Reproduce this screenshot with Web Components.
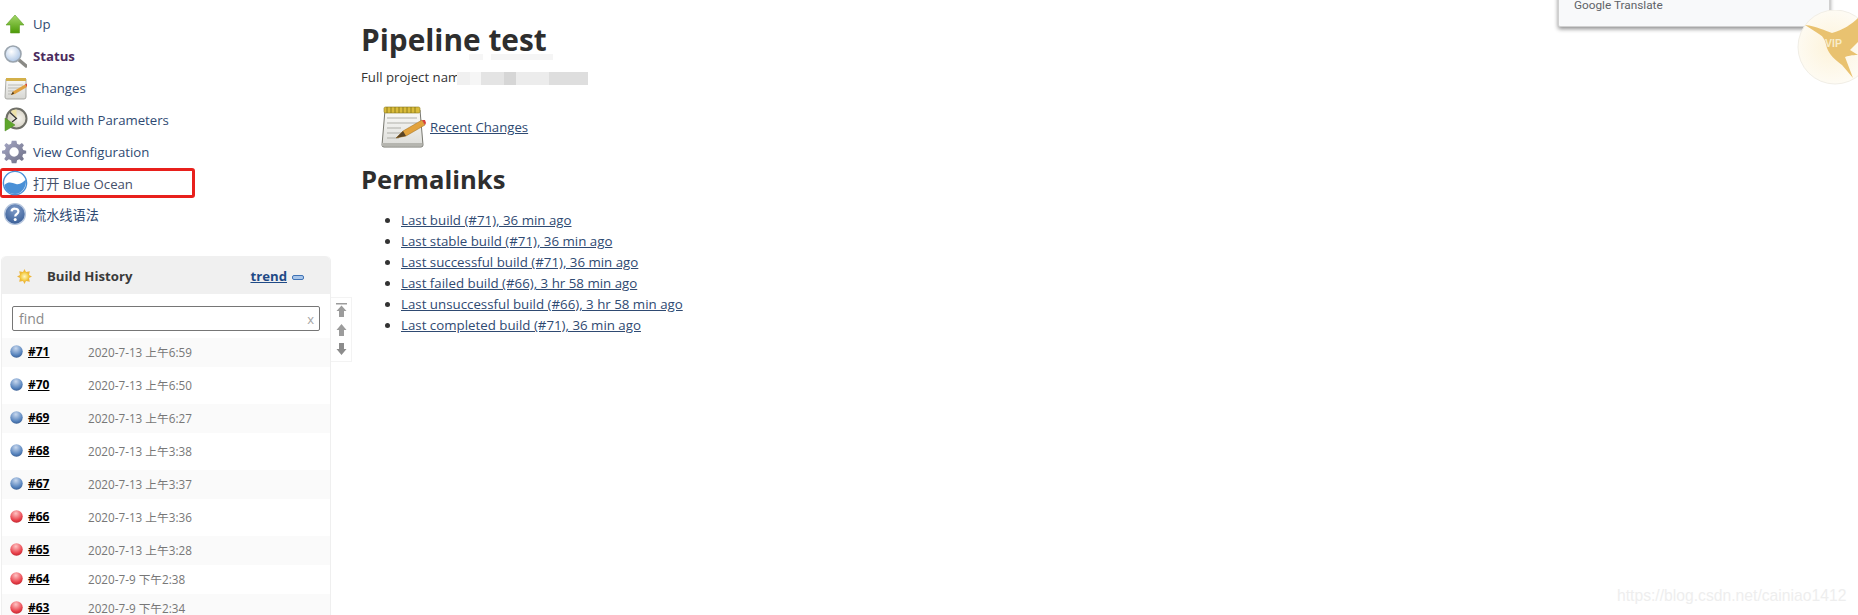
<!DOCTYPE html>
<html>
<head>
<meta charset="utf-8">
<title>Pipeline test</title>
<style>
    html, body { margin: 0; height: 615px; overflow: hidden; background: #fff; }
    body { font-family: "Open Sans", "Noto Sans CJK SC", sans-serif; font-size: 13.2px; color: #333; }
</style>
</head>
<body>
<jk-page>
    <jk-side-panel slot="side">
        <jk-task icon="up" label="Up"></jk-task>
        <jk-task icon="status" label="Status" current></jk-task>
        <jk-task icon="changes" label="Changes"></jk-task>
        <jk-task icon="build" label="Build with Parameters"></jk-task>
        <jk-task icon="config" label="View Configuration"></jk-task>
        <jk-task icon="ocean" label="打开 Blue Ocean" marked></jk-task>
        <jk-task icon="help" label="流水线语法"></jk-task>
        <jk-build-history>
            <jk-build-row num="71" date="2020-7-13 上午6:59" state="ok"></jk-build-row>
            <jk-build-row num="70" date="2020-7-13 上午6:50" state="ok"></jk-build-row>
            <jk-build-row num="69" date="2020-7-13 上午6:27" state="ok"></jk-build-row>
            <jk-build-row num="68" date="2020-7-13 上午3:38" state="ok"></jk-build-row>
            <jk-build-row num="67" date="2020-7-13 上午3:37" state="ok"></jk-build-row>
            <jk-build-row num="66" date="2020-7-13 上午3:36" state="bad"></jk-build-row>
            <jk-build-row num="65" date="2020-7-13 上午3:28" state="bad" tight></jk-build-row>
            <jk-build-row num="64" date="2020-7-9 下午2:38" state="bad" tight></jk-build-row>
            <jk-build-row num="63" date="2020-7-9 下午2:34" state="bad" tight></jk-build-row>
        </jk-build-history>
    </jk-side-panel>
    <jk-main-panel slot="main">
        <jk-permalink>Last build (#71), 36 min ago</jk-permalink>
        <jk-permalink>Last stable build (#71), 36 min ago</jk-permalink>
        <jk-permalink>Last successful build (#71), 36 min ago</jk-permalink>
        <jk-permalink>Last failed build (#66), 3 hr 58 min ago</jk-permalink>
        <jk-permalink>Last unsuccessful build (#66), 3 hr 58 min ago</jk-permalink>
        <jk-permalink>Last completed build (#71), 36 min ago</jk-permalink>
    </jk-main-panel>
</jk-page>
<jk-translate-popup></jk-translate-popup>
<jk-vip-badge></jk-vip-badge>
<jk-watermark>https://blog.csdn.net/cainiao1412</jk-watermark>

<script>
const ICONS = {
    up: `<svg width="24" height="24" viewBox="0 0 24 24"><defs><linearGradient id="g" x1="0" y1="0" x2="0" y2="1"><stop offset="0" stop-color="#a5d86a"/><stop offset="1" stop-color="#4c9a06"/></linearGradient></defs>
        <path d="M12 3 L21 13 H16.5 V21 H7.5 V13 H3 Z" fill="url(#g)" stroke="#5f9e28" stroke-width=".6"/></svg>`,
    status: `<svg width="24" height="24" viewBox="0 0 24 24"><defs><radialGradient id="g" cx=".4" cy=".35" r=".7"><stop offset="0" stop-color="#fff"/><stop offset="1" stop-color="#a9c3e4"/></radialGradient></defs>
        <path d="M16 16 L23 22" stroke="#8a8a86" stroke-width="3.4" stroke-linecap="round"/>
        <circle cx="10" cy="10" r="8" fill="url(#g)" stroke="#9aa4ae" stroke-width="1.6"/></svg>`,
    changes: `<svg width="24" height="24" viewBox="0 0 24 24"><defs><linearGradient id="g" x1="0" y1="0" x2="0" y2="1"><stop offset="0" stop-color="#f8f8f6"/><stop offset="1" stop-color="#d6d6d2"/></linearGradient></defs>
        <path d="M3 3 H23 V21 Q23 23 21 23 H4 Q2 23 2 21 Z" fill="url(#g)" stroke="#9b9b96" stroke-width=".8"/>
        <rect x="3" y="2" width="20" height="3" fill="#d3b04a"/>
        <path d="M5 9 H20 M5 12 H17 M5 15 H11 M5 18 H9" stroke="#b5b5b0" stroke-width=".9"/>
        <path d="M8 19 L10 15.5 L22 8.5 L24 11 L12 18 Z" fill="#e0a040"/>
        <path d="M22 8.5 L24 11 L25 9.5 L23.4 7.6 Z" fill="#d84a3a"/>
        <path d="M8 19 L10 15.5 L11 17.8 Z" fill="#4a3a20"/></svg>`,
    build: `<svg width="26" height="26" viewBox="0 0 26 26"><defs><radialGradient id="g" cx=".6" cy=".5" r=".6"><stop offset="0" stop-color="#f6f4ee"/><stop offset="1" stop-color="#cfcabb"/></radialGradient></defs>
        <circle cx="14.5" cy="11.5" r="10" fill="url(#g)" stroke="#6f6f68" stroke-width="2"/>
        <path d="M14.5 11.5 L9 4 A9 9 0 0 1 14.5 2.5 Z" fill="#eee2a8"/>
        <path d="M8 5.5 L14.5 11.5 L10 15" fill="none" stroke="#333" stroke-width="1.2"/>
        <path d="M3 11 L13 18 L3 24 Z" fill="#5fa62c" stroke="#4c8a20" stroke-width=".5"/></svg>`,
    config: `<svg width="26" height="26" viewBox="0 0 26 26"><defs><linearGradient id="g" x1="0" y1="0" x2="1" y2="1"><stop offset="0" stop-color="#a6a8c6"/><stop offset="1" stop-color="#6c6e84"/></linearGradient></defs>
        <path fill="url(#g)" fill-rule="evenodd" d="M10.5 2 H15.5 L16.2 5.2 L18.6 6.2 L21.4 4.4 L23.6 6.6 L21.8 9.4 L22.8 11.8 L26 12.5 V15.5 L22.8 16.2 L21.8 18.6 L23.6 21.4 L21.4 23.6 L18.6 21.8 L16.2 22.8 L15.5 26 H10.5 L9.8 22.8 L7.4 21.8 L4.6 23.6 L2.4 21.4 L4.2 18.6 L3.2 16.2 L0 15.5 V12.5 L3.2 11.8 L4.2 9.4 L2.4 6.6 L4.6 4.4 L7.4 6.2 L9.8 5.2 Z M13 9 A5 5 0 1 0 13 19 A5 5 0 1 0 13 9 Z" transform="scale(.93)"/></svg>`,
    ocean: `<svg width="26" height="26" viewBox="0 0 26 26">
        <circle cx="13" cy="13" r="11.6" fill="#fff" stroke="#4a90d6" stroke-width="1.4"/>
        <path d="M2.4 15 C7 11 10 13 14 14 C18 15 21 12 23.8 9.5 C25 16 20 24 13 24 C7 24 3 20 2.4 15 Z" fill="#4a90d6"/></svg>`,
    help: `<svg width="24" height="24" viewBox="0 0 24 24"><defs><radialGradient id="g" cx=".5" cy=".3" r=".8"><stop offset="0" stop-color="#7f9cc9"/><stop offset="1" stop-color="#2f5590"/></radialGradient></defs>
        <circle cx="12" cy="12" r="10.4" fill="url(#g)" stroke="#b6c6de" stroke-width="1.4"/>
        <path d="M8.6 9.4 C8.8 5.8 15.4 5.8 15.4 9.6 C15.4 12 12.2 12 12.2 14.4" fill="none" stroke="#fff" stroke-width="2.2"/>
        <circle cx="12.2" cy="17.4" r="1.5" fill="#fff"/></svg>`
};

const TASK_TEMPLATE = document.createElement('template');
TASK_TEMPLATE.innerHTML = `
    <style>
        :host { display: block; height: 32px; }
        :host([marked]) { height: 30px; }
        .task {
            display: flex;
            align-items: center;
            height: 32px;
            color: #2f4a72;
            text-decoration: none;
        }
        .icon {
            flex: none;
            width: 26px;
            height: 26px;
            margin: 0 5px 0 2px;
            display: flex;
            align-items: center;
            justify-content: center;
        }
        :host([current]) .task { color: #4a2a5c; font-weight: bold; }
        :host([marked]) .task {
            box-sizing: border-box;
            width: 195px;
            height: 30px;
            border: 3px solid #e8201c;
            border-left-width: 2px;
            border-radius: 3px;
            color: #44506a;
        }
        :host([marked]) .icon { margin-left: 0; }
    </style>
    <a class="task" href="#"><span class="icon"></span><span class="label"></span></a>
`;

class JkTask extends HTMLElement {
    constructor() {
        super();
        this.attachShadow({ mode: 'open' });
        this.shadowRoot.appendChild(TASK_TEMPLATE.content.cloneNode(true));
    }

    connectedCallback() {
        const name = this.getAttribute('icon');
        // gradient ids stay private to each shadow root, so "g" can repeat
        this.shadowRoot.querySelector('.icon').innerHTML = ICONS[name] || '';
        this.shadowRoot.querySelector('.label').textContent = this.getAttribute('label');
    }
}
customElements.define('jk-task', JkTask);

class JkPage extends HTMLElement {
    constructor() {
        super();
        this.attachShadow({ mode: 'open' });
        this.shadowRoot.innerHTML = `
            <style>
                :host { display: flex; align-items: flex-start; }
                .side { flex: none; width: 361px; }
                .main { flex: 1; min-width: 0; }
            </style>
            <div class="side"><slot name="side"></slot></div>
            <div class="main"><slot name="main"></slot></div>
        `;
    }
}
customElements.define('jk-page', JkPage);

class JkSidePanel extends HTMLElement {
    constructor() {
        super();
        this.attachShadow({ mode: 'open' });
        this.shadowRoot.innerHTML = `
            <style>
                :host { display: block; padding-top: 8px; }
            </style>
            <slot></slot>
        `;
    }
}
customElements.define('jk-side-panel', JkSidePanel);

class JkBuildHistory extends HTMLElement {
    constructor() {
        super();
        this.attachShadow({ mode: 'open' });
        this.shadowRoot.innerHTML = `
            <style>
                :host { display: flex; align-items: flex-start; margin: 26px 0 0 1px; }
                .pane {
                    flex: none;
                    box-sizing: border-box;
                    width: 330px;
                    border: 1px solid #efefef;
                    border-top: none;
                    border-radius: 5px 5px 0 0;
                }
                header {
                    box-sizing: border-box;
                    display: flex;
                    align-items: center;
                    height: 38px;
                    padding-top: 2px;
                    background: #f0f0f0;
                    border-radius: 5px 5px 0 0;
                    font-weight: bold;
                    color: #3a3a3a;
                }
                .sun { margin: 1px 15px 0 15px; display: flex; }
                .title { flex: 1; }
                .trend { color: #1f4a86; margin-right: 5px; }
                .minus {
                    width: 10px;
                    height: 3px;
                    margin: 2px 26px 0 0;
                    background: #a9c6ea;
                    border: 1px solid #3f72b4;
                    border-radius: 2px;
                }
                .search {
                    box-sizing: border-box;
                    display: flex;
                    align-items: center;
                    justify-content: space-between;
                    height: 25px;
                    margin: 12px 10px 7px 10px;
                    padding: 0 6px;
                    border: 1px solid #767676;
                    border-radius: 2px;
                    color: #8a8a8a;
                    font-size: 14px;
                }
                .search span:last-child { font-size: 13px; color: #a5a5a5; margin-right: -1px; }
                .scroll {
                    flex: none;
                    box-sizing: border-box;
                    display: flex;
                    flex-direction: column;
                    align-items: center;
                    gap: 7px;
                    width: 21px;
                    height: 65px;
                    margin-top: 41px;
                    padding-top: 5px;
                    border: 1px solid #f3f3f3;
                    border-left: none;
                }
                .scroll svg { display: block; flex: none; }
            </style>
            <div class="pane">
                <header>
                    <span class="sun">
                        <svg width="15" height="15" viewBox="0 0 15 15">
                            <defs><radialGradient id="s"><stop offset="0" stop-color="#fff6c0"/><stop offset="1" stop-color="#f2c531"/></radialGradient></defs>
                            <path d="M7.5 0 L9 3 L12.8 2.2 L12 6 L15 7.5 L12 9 L12.8 12.8 L9 12 L7.5 15 L6 12 L2.2 12.8 L3 9 L0 7.5 L3 6 L2.2 2.2 L6 3 Z" fill="#edb63c"/>
                            <circle cx="7.5" cy="7.5" r="4.6" fill="url(#s)"/>
                        </svg>
                    </span>
                    <span class="title">Build History</span>
                    <a class="trend" href="#">trend</a>
                    <span class="minus"></span>
                </header>
                <div class="search"><span>find</span><span>x</span></div>
                <slot></slot>
            </div>
            <div class="scroll">
                <svg width="11" height="14" viewBox="0 0 11 14" fill="#9c9c9c"><rect x="0" y="0" width="11" height="1.5"/><path d="M5.5 2.5 L10.5 8 H8 V14 H3 V8 H.5 Z"/></svg>
                <svg width="11" height="12" viewBox="0 0 11 12" fill="#9c9c9c"><path d="M5.5 0 L10.5 6 H8 V12 H3 V6 H.5 Z"/></svg>
                <svg width="11" height="12" viewBox="0 0 11 12" fill="#8c8c8c"><path d="M3 0 H8 V6 H10.5 L5.5 12 L.5 6 H3 Z"/></svg>
            </div>
        `;
    }
}
customElements.define('jk-build-history', JkBuildHistory);

class JkBuildRow extends HTMLElement {
    constructor() {
        super();
        this.attachShadow({ mode: 'open' });
        this.shadowRoot.innerHTML = `
            <style>
                :host {
                    box-sizing: border-box;
                    display: flex;
                    align-items: center;
                    height: 29px;
                    margin-bottom: 4px;
                    padding: 0 0 2px 8px;
                    font-size: 12px;
                }
                :host([tight]) { margin-bottom: 0; }
                :host(:nth-of-type(odd)) { background: #fafafa; }
                .ball { flex: none; display: flex; margin-right: 5px; }
                a { flex: none; width: 60px; color: #000; font-weight: bold; }
                .date { color: #777; font-size: 11.7px; }
            </style>
            <span class="ball"></span>
            <a href="#"></a>
            <span class="date"></span>
        `;
    }

    connectedCallback() {
        const colors = this.getAttribute('state') === 'bad'
            ? ['#ffc4c4', '#e8404a', '#b8242c']
            : ['#c8d8ee', '#5582bc', '#34588c'];
        this.shadowRoot.querySelector('.ball').innerHTML = `
            <svg width="13" height="13" viewBox="0 0 13 13">
                <defs><radialGradient id="b" cx=".45" cy=".25" r=".8">
                    <stop offset="0" stop-color="${colors[0]}"/>
                    <stop offset=".7" stop-color="${colors[1]}"/>
                    <stop offset="1" stop-color="${colors[2]}"/>
                </radialGradient></defs>
                <circle cx="6.5" cy="6.5" r="6.2" fill="url(#b)"/>
            </svg>`;
        this.shadowRoot.querySelector('a').textContent = '#' + this.getAttribute('num');
        this.shadowRoot.querySelector('.date').textContent = this.getAttribute('date');
    }
}
customElements.define('jk-build-row', JkBuildRow);

class JkMainPanel extends HTMLElement {
    constructor() {
        super();
        this.attachShadow({ mode: 'open' });
        this.shadowRoot.innerHTML = `
            <style>
                :host { display: block; position: relative; padding-top: 19px; }
                h1 { margin: 0; font-size: 29.8px; line-height: 41px; color: #2e2e2e; }
                h2 { margin: 12px 0 12px; font-size: 25.6px; line-height: 36px; color: #2e2e2e; }
                p { margin: 8px 0 0; line-height: 18px; }
                .changes {
                    display: flex;
                    align-items: flex-end;
                    margin: 18px 0 0 20px;
                    height: 46px;
                }
                .changes svg { flex: none; margin-right: 4px; }
                .changes a { color: #2f4a72; margin-bottom: 14px; }
                ul { margin: 0; padding: 0 0 0 40px; }
                .blur {
                    position: absolute;
                    left: 96px;
                    top: 72px;
                    width: 131px;
                    height: 13px;
                    background: linear-gradient(90deg, #f0f0f0 0 10%, #f6f6f6 10% 18%, #e4e4e4 18% 36%, #d6d6d6 36% 45%, #ececec 45% 70%, #dedede 70% 100%);
                }
                .blur.top {
                    left: 104px;
                    top: 54px;
                    width: 88px;
                    height: 6px;
                    background: linear-gradient(90deg, #fff 0 5%, #f6f6f6 5% 20%, #fff 20% 30%, #f5f5f5 30% 100%);
                }
            </style>
            <h1>Pipeline test</h1>
            <p>Full project nam</p>
            <div class="blur top"></div>
            <div class="blur"></div>
            <div class="changes">
                <svg width="45" height="45" viewBox="0 0 45 45">
                    <defs><linearGradient id="n" x1="0" y1="0" x2="0" y2="1"><stop offset="0" stop-color="#fbfbf9"/><stop offset="1" stop-color="#dcdcd8"/></linearGradient></defs>
                    <path d="M3 4 H38 L41 39 Q41 41 39 41 H2 Q0 41 0 39 Z" fill="url(#n)" stroke="#77776f" transform="translate(1 1)"/>
                    <rect x="3" y="2" width="36" height="6" rx="1.5" fill="#d9bb3a" stroke="#8c7a1c" stroke-width=".6"/>
                    <path d="M6 2 v6 M10 2 v6 M14 2 v6 M18 2 v6 M22 2 v6 M26 2 v6 M30 2 v6 M34 2 v6" stroke="#7f6e14" stroke-width=".8"/>
                    <path d="M6 13 H36 M6 18 H36 M6 23 H20 M6 28 H26 M6 33 H18" stroke="#a8a8a2" stroke-width=".9"/>
                    <rect x="1" y="38" width="40" height="3" fill="#b5b5af"/>
                    <path d="M15 33 L22 26 L41 15 L44 20 L25 31 Z" fill="#e2a23c" stroke="#9a6a1c" stroke-width=".5"/>
                    <path d="M41 15 L44 20 L45 18 L44 15 Z" fill="#d8403a"/>
                    <path d="M15 33 L22 26 L25 31 Z" fill="#5a4526"/>
                </svg>
                <a href="#">Recent Changes</a>
            </div>
            <h2>Permalinks</h2>
            <ul><slot></slot></ul>
        `;
    }
}
customElements.define('jk-main-panel', JkMainPanel);

class JkPermalink extends HTMLElement {
    constructor() {
        super();
        this.attachShadow({ mode: 'open' });
        this.shadowRoot.innerHTML = `
            <style>
                :host { display: list-item; line-height: 21px; font-size: 13.3px; }
                a { color: #2f4a72; }
            </style>
            <a href="#"><slot></slot></a>
        `;
    }
}
customElements.define('jk-permalink', JkPermalink);

class JkTranslatePopup extends HTMLElement {
    constructor() {
        super();
        this.attachShadow({ mode: 'open' });
        this.shadowRoot.innerHTML = `
            <style>
                :host {
                    position: absolute;
                    left: 1558px;
                    top: -30px;
                    box-sizing: border-box;
                    width: 272px;
                    height: 57px;
                    padding: 25px 0 0 15px;
                    background: #f8f9fa;
                    border: 1px solid #d0d0d0;
                    border-radius: 2px;
                    box-shadow: 0 2px 4px rgba(0,0,0,.45);
                    font-family: Roboto, sans-serif;
                    font-size: 11.8px;
                    line-height: 18px;
                    color: #5f6368;
                }
            </style>
            Google Translate
        `;
    }
}
customElements.define('jk-translate-popup', JkTranslatePopup);

class JkVipBadge extends HTMLElement {
    constructor() {
        super();
        this.attachShadow({ mode: 'open' });
        this.shadowRoot.innerHTML = `
            <style>
                :host { position: absolute; left: 1797px; top: 10px; display: block; width: 61px; height: 76px; overflow: hidden; }
                svg { display: block; }
                text { font: bold 10.5px "Liberation Sans", sans-serif; fill: #f8ecc8; }
            </style>
            <svg width="76" height="76" viewBox="0 0 76 76">
                <defs><radialGradient id="v" cx=".45" cy=".5" r=".55"><stop offset="0" stop-color="#fdf3da"/><stop offset="1" stop-color="#fefcf6"/></radialGradient></defs>
                <circle cx="38" cy="37" r="37" fill="url(#v)" stroke="#f1eee6"/>
                <path d="M8 15 C20 16 28 21 35 23 C46 20 55 14 61 8 L61 32 L53 40 L61 45 C55 45 50 46 48 47 L56 68 L45 55 C38 50 32 44 30 38 C28 30 27 27 22 24 Z" fill="#e9c270"/>
                <text x="28" y="37">VIP</text>
            </svg>
        `;
    }
}
customElements.define('jk-vip-badge', JkVipBadge);

class JkWatermark extends HTMLElement {
    constructor() {
        super();
        this.attachShadow({ mode: 'open' });
        this.shadowRoot.innerHTML = `
            <style>
                :host {
                    position: absolute;
                    left: 1617px;
                    top: 586px;
                    font-family: "Liberation Sans", sans-serif;
                    font-size: 15.7px;
                    line-height: 20px;
                    color: #eeeeee;
                    white-space: nowrap;
                }
            </style>
            <slot></slot>
        `;
    }
}
customElements.define('jk-watermark', JkWatermark);
</script>
</body>
</html>
